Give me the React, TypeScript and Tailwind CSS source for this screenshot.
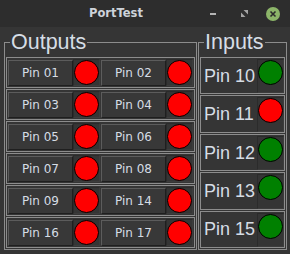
import React from "react";

const OUTS: [string, string][] = [
  ["01", "02"],
  ["03", "04"],
  ["05", "06"],
  ["07", "08"],
  ["09", "14"],
  ["16", "17"],
];

const INS: { pin: string; on: boolean }[] = [
  { pin: "10", on: true },
  { pin: "11", on: false },
  { pin: "12", on: true },
  { pin: "13", on: true },
  { pin: "15", on: true },
];

function Led({ on, cls = "" }: { on: boolean; cls?: string }) {
  return (
    <div className={`flex w-[27px] justify-center border border-[#2b2b2b] border-r-[#3c3c3c] border-b-[#3c3c3c] ${cls}`}>
      <div
        className={`h-[25px] w-[25px] shrink-0 rounded-full border border-black ${on ? "bg-[#008000]" : "bg-[#ff0000]"}`}
      />
    </div>
  );
}

function PinButton({ label }: { label: string }) {
  return (
    <div className="flex h-[26px] w-[65px] items-center justify-center border border-t-[#5c5c5c] border-l-[#5c5c5c] border-r-[#1f1f1f] border-b-[#1f1f1f] bg-[#383838] font-['DejaVu_Sans',sans-serif] text-[12px] text-[#d6dde5]">
      {label}
    </div>
  );
}

function Group({ title, className, children }: { title: string; className: string; children: React.ReactNode }) {
  return (
    <fieldset className={`border border-[#8c8c8c] px-[1px] pb-[1px] ${className}`}>
      <legend className="ml-[4px] px-[1px] font-['Liberation_Sans',sans-serif] text-[21.5px] leading-[26px] text-[#d6dde5]">
        {title}
      </legend>
      {children}
    </fieldset>
  );
}

export default function App() {
  return (
    <div className="flex h-[254px] w-[290px] flex-col overflow-hidden bg-[#353535]">
      <div className="flex h-[27px] shrink-0 items-center bg-[#2d2d2d]">
        <span className="ml-[89px] font-['DejaVu_Sans',sans-serif] text-[11.5px] font-bold text-[#cdd3da]">
          PortTest
        </span>
        <div className="ml-auto flex items-center">
          <div className="mr-[25px] h-[2px] w-[6px] bg-[#b4b4b4]" />
          <svg width="7" height="7" viewBox="0 0 7 7" className="mr-[18px]">
            <polygon points="2.5,0 7,0 7,4.5" fill="#a4a4a4" />
            <polygon points="0,2.5 0,7 4.5,7" fill="#a4a4a4" />
          </svg>
          <svg width="14" height="14" viewBox="0 0 14 14" className="mr-[10px]">
            <circle cx="7" cy="7" r="7" fill="#8cb569" />
            <path d="M4.5 4.5 L9.5 9.5 M9.5 4.5 L4.5 9.5" stroke="#2b2b2b" strokeWidth="1.6" />
          </svg>
        </div>
      </div>

      <div className="flex gap-[1px] pl-[4px] pt-[2px]">
        <Group title="Outputs" className="w-[193px]">
          <div className="flex flex-col gap-[1px] pt-[2px]">
            {OUTS.map(([a, b]) => (
              <div key={a} className="flex h-[31px] border border-[#8c8c8c] pl-[1px] pt-[1px]">
                <div className="flex pt-[1px]">
                  <PinButton label={`Pin ${a}`} />
                </div>
                <Led on={false} cls="h-[27px]" />
                <div className="ml-[1px] flex pt-[1px]">
                  <PinButton label={`Pin ${b}`} />
                </div>
                <Led on={false} cls="h-[27px]" />
              </div>
            ))}
          </div>
        </Group>

        <Group title="Inputs" className="w-[89px]">
          <div className="flex h-[193px] flex-col gap-[1px] pt-[2px]">
            {INS.map((r) => (
              <div key={r.pin} className="flex flex-1 border border-[#8c8c8c] pt-[1px]">
                <div className="flex flex-1 items-center pl-[3px] font-['Liberation_Sans',sans-serif] text-[18px] text-[#d6dde5]">
                  Pin {r.pin}
                </div>
                <Led on={r.on} />
              </div>
            ))}
          </div>
        </Group>
      </div>
    </div>
  );
}
